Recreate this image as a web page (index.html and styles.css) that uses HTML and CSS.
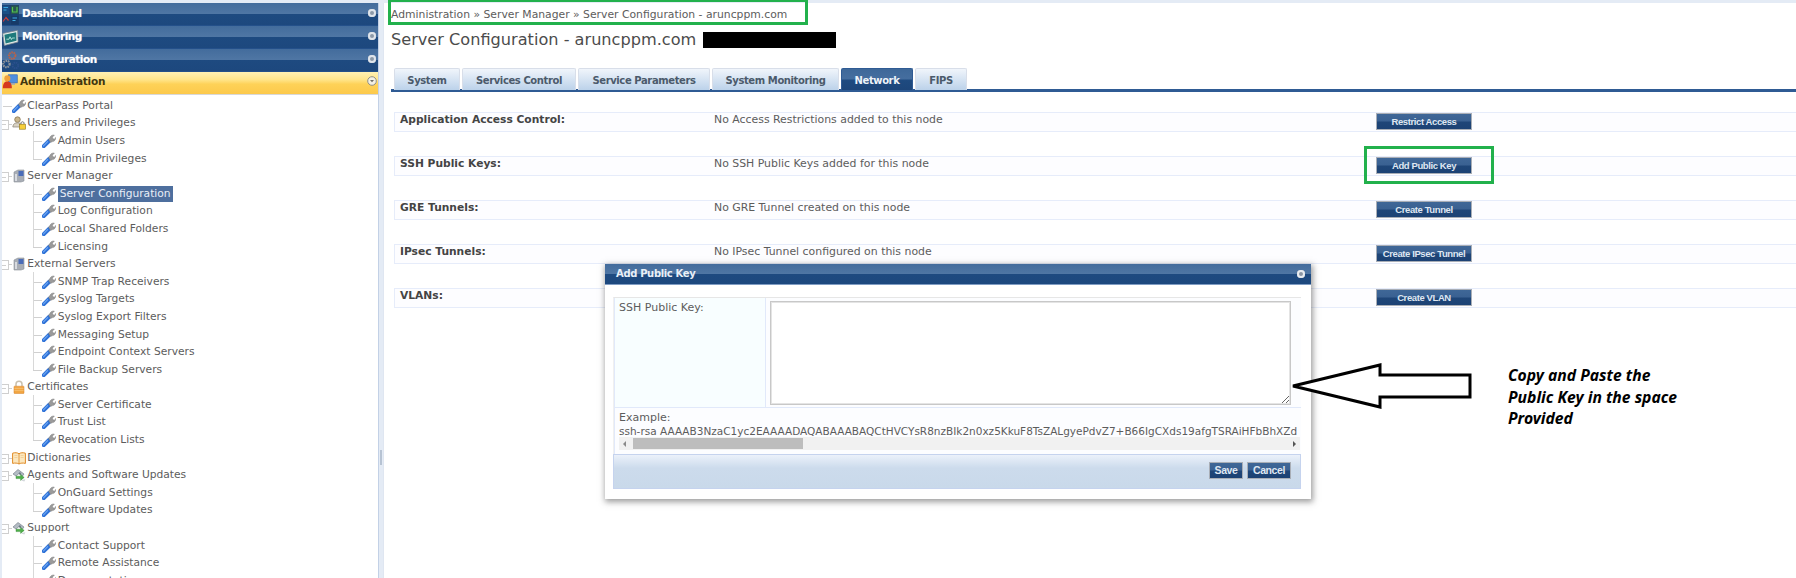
FILE: index.html
```html
<!DOCTYPE html>
<html lang="en">
<head>
<meta charset="utf-8">
<title>Server Configuration</title>
<link rel="stylesheet" href="styles.css">
</head>
<body>
<svg class="defs" width="0" height="0" aria-hidden="true">
  <symbol id="wrench" viewBox="0 0 14 14">
    <path d="M1.8 12.2 7.5 6.5" stroke="#2f72d8" stroke-width="4" stroke-linecap="round"/>
    <path d="M1.5 11.8 5.6 7.7" stroke="#6fa8f2" stroke-width="1.1" stroke-linecap="round"/>
    <path d="M6.5 5.5 8 3.2C9 1.4 10.8.6 12.4 1.1L10.4 3.2 11 4.8 12.6 5.2 13.6 3.4C14 5.4 12.6 7.4 10.6 7.6L8.6 8.4Z" fill="#9a9a9a" stroke="#757575" stroke-width=".4"/>
  </symbol>
  <symbol id="users" viewBox="0 0 14 14">
    <circle cx="5.5" cy="3.6" r="2.8" fill="#c9b68c" stroke="#7d6a48" stroke-width=".7"/>
    <path d="M.8 11C1 7.8 3 6.8 5.5 6.8S9.5 7.8 9.8 11Z" fill="#d8d2c4" stroke="#8b8272" stroke-width=".7"/>
    <rect x="7.5" y="8.2" width="6" height="5" fill="#f6cf3b" stroke="#8c7218" stroke-width=".6"/>
    <path d="M9 8V6.8A1.6 1.6 0 0 1 12 6.8V8" fill="none" stroke="#6f6f6f"/>
  </symbol>
  <symbol id="server" viewBox="0 0 14 14">
    <path d="M2 3 6 1H12V12L9 13H2Z" fill="#a8adb5" stroke="#8a9099" stroke-width=".6"/>
    <path d="M6.5 2H11.5V7H6.5Z" fill="#4a6cb8"/>
    <path d="M3 5H5V12H3Z" fill="#d8dbe0"/>
  </symbol>
  <symbol id="lock" viewBox="0 0 14 14">
    <path d="M4 6.5V4.2A3 3 0 0 1 10 4.2V6.5" fill="none" stroke="#c9c0ae" stroke-width="1.5"/>
    <rect x="2" y="6.2" width="10" height="7.3" rx=".6" fill="#f2a541" stroke="#d4822a" stroke-width=".5"/>
    <path d="M2.4 8.4H11.6M2.4 10.6H11.6" stroke="#f9c97f" stroke-width=".7"/>
  </symbol>
  <symbol id="book" viewBox="0 0 14 14">
    <path d="M.6 2.2C3 1.4 5.5 1.6 7 2.8 8.5 1.6 11 1.4 13.4 2.2V12.4C11 11.8 8.5 12 7 13 5.5 12 3 11.8.6 12.4Z" fill="#fbe7bf" stroke="#e08a24" stroke-width="1"/>
    <path d="M7 2.8V13" stroke="#e08a24" stroke-width=".8"/>
    <path d="M2.4 4.5H5.4M2.4 6.5H5.4M8.6 4.5H11.6M8.6 6.5H11.6" stroke="#eec27f" stroke-width=".6"/>
  </symbol>
  <symbol id="agent" viewBox="0 0 14 14">
    <path d="M1 6 6 1.5 12 6 10.5 8 7 5.5 4 8Z" fill="#b4bcc4" stroke="#6d7781" stroke-width=".6"/>
    <path d="M6.5 5.2 8 4 9.2 5.8 8 7Z" fill="#6f7b87"/>
    <path d="M4 8.2H8.6V6.4L12.2 9.4 8.6 12.4V10.6H4Z" fill="#4fb04a" stroke="#2f8030" stroke-width=".4"/>
    <path d="M9 12.6 13.4 11 12.4 13.4Z" fill="#d2d6db"/>
  </symbol>
</svg>

<aside class="sidebar">
  <nav class="accordion">
    <div class="nav-item">
      <svg class="nav-icon" viewBox="0 0 17 20">
        <rect width="17" height="20" fill="#1a3f70"/>
        <rect x=".5" y=".5" width="7" height="8.5" fill="#1b4f85"/>
        <path d="M1.5 2.5H6M1.5 5H4.5" stroke="#37a6e0" stroke-width="1.2"/>
        <rect x="9" y=".5" width="7.5" height="8.5" fill="#27564e"/>
        <path d="M10.5 2V7H15V2" fill="none" stroke="#54c24f" stroke-width="1.2"/>
        <path d="M1 16.5 4 12.5 6.5 15.5" fill="none" stroke="#cf3d38" stroke-width="1.2"/>
        <rect x="9" y="11" width="7.5" height="8.5" fill="#173a68"/>
        <path d="M10.5 13H15M10.5 15.5H13.5" stroke="#3faee8" stroke-width="1.2"/>
      </svg>
      <span class="nav-label">Dashboard</span><span class="nav-dot"></span>
    </div>
    <div class="nav-item">
      <svg class="nav-icon" viewBox="0 0 17 20">
        <path d="M.8 5.5 15.6 2.4 16 14 2.4 17.4Z" fill="#e4ecec" stroke="#7f8b8f" stroke-width=".7"/>
        <path d="M2.4 6.8 14.2 4.2 14.5 12.8 3.6 15.5Z" fill="#1f7a7c"/>
        <path d="M4.4 11.2H7L8 8.8 9.4 11.5 10.2 10H12.8" fill="none" stroke="#c8f4e8" stroke-width=".8"/>
      </svg>
      <span class="nav-label">Monitoring</span><span class="nav-dot"></span>
    </div>
    <div class="nav-item nav-gears">
      <svg class="nav-icon nav-icon-tall" viewBox="0 0 17 21">
        <circle cx="10.2" cy="5.6" r="3.2" fill="none" stroke="#b8634a" stroke-width="2" stroke-dasharray="1.6 .7"/>
        <circle cx="4.4" cy="14" r="3.2" fill="none" stroke="#8e949b" stroke-width="2.2" stroke-dasharray="1.6 .7"/>
        <circle cx="13.4" cy="15.5" r="2.8" fill="none" stroke="#2a4f8c" stroke-width="1.8" stroke-dasharray="1.5 .7"/>
      </svg>
      <span class="nav-label">Configuration</span><span class="nav-dot"></span>
    </div>
    <div class="nav-item nav-active">
      <svg class="nav-icon" viewBox="0 0 17 20">
        <rect x="6" y="2" width="10" height="9" fill="#4f8fe0" stroke="#2c62ad" stroke-width=".7"/>
        <path d="M8.5 11H13.5V13H8.5Z" fill="#9aa7b6"/>
        <circle cx="5" cy="6" r="3.4" fill="#f0a23c"/>
        <path d="M0 17C0 11.5 2 9.5 5 9.5S10 11.5 10 17Z" fill="#d5391f"/>
      </svg>
      <span class="nav-label">Administration</span>
      <svg class="nav-chevron" viewBox="0 0 10 10"><circle cx="5" cy="5" r="4.3" fill="#f3f0e4" stroke="#8f8f86"/><path d="M3 4 5 6.2 7 4Z" fill="#6f6f68"/></svg>
    </div>
  </nav>

  <ul class="tree">
    <li class="node root leaf"><svg class="ti"><use href="#wrench"/></svg><span>ClearPass Portal</span></li>
    <li class="node root group"><svg class="ti"><use href="#users"/></svg><span>Users and Privileges</span></li>
    <li class="node child"><svg class="ti"><use href="#wrench"/></svg><span>Admin Users</span></li>
    <li class="node child last"><svg class="ti"><use href="#wrench"/></svg><span>Admin Privileges</span></li>
    <li class="node root group"><svg class="ti"><use href="#server"/></svg><span>Server Manager</span></li>
    <li class="node child"><svg class="ti"><use href="#wrench"/></svg><span class="selected">Server Configuration</span></li>
    <li class="node child"><svg class="ti"><use href="#wrench"/></svg><span>Log Configuration</span></li>
    <li class="node child"><svg class="ti"><use href="#wrench"/></svg><span>Local Shared Folders</span></li>
    <li class="node child last"><svg class="ti"><use href="#wrench"/></svg><span>Licensing</span></li>
    <li class="node root group"><svg class="ti"><use href="#server"/></svg><span>External Servers</span></li>
    <li class="node child"><svg class="ti"><use href="#wrench"/></svg><span>SNMP Trap Receivers</span></li>
    <li class="node child"><svg class="ti"><use href="#wrench"/></svg><span>Syslog Targets</span></li>
    <li class="node child"><svg class="ti"><use href="#wrench"/></svg><span>Syslog Export Filters</span></li>
    <li class="node child"><svg class="ti"><use href="#wrench"/></svg><span>Messaging Setup</span></li>
    <li class="node child"><svg class="ti"><use href="#wrench"/></svg><span>Endpoint Context Servers</span></li>
    <li class="node child last"><svg class="ti"><use href="#wrench"/></svg><span>File Backup Servers</span></li>
    <li class="node root group"><svg class="ti"><use href="#lock"/></svg><span>Certificates</span></li>
    <li class="node child"><svg class="ti"><use href="#wrench"/></svg><span>Server Certificate</span></li>
    <li class="node child"><svg class="ti"><use href="#wrench"/></svg><span>Trust List</span></li>
    <li class="node child last"><svg class="ti"><use href="#wrench"/></svg><span>Revocation Lists</span></li>
    <li class="node root group"><svg class="ti"><use href="#book"/></svg><span>Dictionaries</span></li>
    <li class="node root group"><svg class="ti"><use href="#agent"/></svg><span>Agents and Software Updates</span></li>
    <li class="node child"><svg class="ti"><use href="#wrench"/></svg><span>OnGuard Settings</span></li>
    <li class="node child last"><svg class="ti"><use href="#wrench"/></svg><span>Software Updates</span></li>
    <li class="node root group"><svg class="ti"><use href="#agent"/></svg><span>Support</span></li>
    <li class="node child"><svg class="ti"><use href="#wrench"/></svg><span>Contact Support</span></li>
    <li class="node child"><svg class="ti"><use href="#wrench"/></svg><span>Remote Assistance</span></li>
    <li class="node child"><svg class="ti"><use href="#wrench"/></svg><span>Documentation</span></li>
  </ul>
</aside>

<div class="splitter"><span class="grip"></span></div>

<main class="main">
  <div class="crumbs">Administration » Server Manager » Server Configuration - aruncppm.com</div>
  <h1 class="title">Server Configuration - aruncppm.com <span class="redacted"></span></h1>

  <div class="tabs">
    <a class="tab tab-system">System</a>
    <a class="tab tab-services">Services Control</a>
    <a class="tab tab-params">Service Parameters</a>
    <a class="tab tab-monitor">System Monitoring</a>
    <a class="tab tab-network tab-on">Network</a>
    <a class="tab tab-fips">FIPS</a>
  </div>

  <section class="rows">
    <div class="row"><b>Application Access Control:</b><span>No Access Restrictions added to this node</span><button class="btn">Restrict Access</button></div>
    <div class="row"><b>SSH Public Keys:</b><span>No SSH Public Keys added for this node</span><button class="btn">Add Public Key</button></div>
    <div class="row"><b>GRE Tunnels:</b><span>No GRE Tunnel created on this node</span><button class="btn">Create Tunnel</button></div>
    <div class="row"><b>IPsec Tunnels:</b><span>No IPsec Tunnel configured on this node</span><button class="btn">Create IPsec Tunnel</button></div>
    <div class="row"><b>VLANs:</b><span></span><button class="btn">Create VLAN</button></div>
  </section>
</main>

<div class="modal">
  <header class="modal-head"><span>Add Public Key</span><i class="modal-close"></i></header>
  <div class="modal-body">
    <div class="form">
      <div class="form-top">
        <label class="form-label" for="key">SSH Public Key:</label>
        <div class="form-field"><textarea id="key" class="key-input"></textarea></div>
      </div>
      <div class="form-example">
        <div class="example-title">Example:</div>
        <div class="example-key">ssh-rsa AAAAB3NzaC1yc2EAAAADAQABAAABAQCtHVCYsR8nzBIk2n0xz5KkuF8TsZALgyePdvZ7+B66IgCXds19afgTSRAiHFbBhXZd</div>
        <div class="hscroll"><i class="arrow-l"></i><i class="thumb"></i><i class="arrow-r"></i></div>
      </div>
    </div>
    <footer class="modal-foot"><button class="btn btn-small btn-save">Save</button><button class="btn btn-small btn-cancel">Cancel</button></footer>
  </div>
</div>

<div class="mark mark-crumbs"></div>
<div class="mark mark-button"></div>
<svg class="callout-arrow" width="190" height="50" viewBox="0 0 190 50">
  <path d="M8 26 95 5V15H185V37H95V47Z" fill="#fff" stroke="#000" stroke-width="3"/>
</svg>
<p class="callout-text">Copy and Paste the<br>Public Key in the space<br>Provided</p>
</body>
</html>
```
FILE: styles.css
```css
* { box-sizing: border-box; }
html, body { margin: 0; height: 578px; overflow: hidden; }
body {
  display: flex;
  padding: 3px 0 0 2px;
  background: #e4ebf5;
  font: 10.7px/14px "DejaVu Sans", sans-serif;
  color: #5c5c5c;
  position: relative;
}
.defs { position: absolute; }

/* sidebar */
.sidebar { width: 377px; flex: none; background: #fff; border-right: 1px solid #c3d1e6; overflow: hidden; }
.accordion { display: flex; flex-direction: column; }
.nav-item {
  height: 23px;
  display: flex;
  align-items: center;
  position: relative;
  padding-left: 20px;
  padding-right: 2px;
  padding-bottom: 2px;
  background: linear-gradient(#436c9c 0, #4f76a4 48%, #1e4a80 50%, #1d487e 100%);
  border-bottom: 1px solid #24508a;
  color: #fff;
  font-weight: bold;
  font-size: 10.5px;
  letter-spacing: -.5px;
}
.nav-label { flex: 1; text-shadow: 0 0 1px #9db3cf; }
.nav-active {
  height: 22.5px;
  padding-left: 18px;
  padding-bottom: 4px;
  letter-spacing: -.2px;
  background: linear-gradient(#fff1b4 0, #ffe58a 35%, #fed258 55%, #fcc94b 100%);
  border-bottom: 1px solid #d8d8d8;
  color: #42360f;
}
.nav-active .nav-label { text-shadow: none; }
.nav-icon { position: absolute; left: 0; top: 2px; width: 17px; height: 20px; }
.nav-icon-tall { top: 1px; height: 21px; }
.nav-active .nav-icon { top: 1px; height: 18px; }
.nav-dot { width: 8px; height: 8px; border-radius: 50%; background: #e9edf2; box-shadow: inset 0 0 0 2px #dfe5ec, inset 0 0 0 4px #8c99a8; flex: none; }
.nav-chevron { width: 10px; height: 10px; flex: none; margin-right: -1px; }

/* tree */
.tree { list-style: none; margin: 0; padding: 2.5px 0 0; }
.node { height: 17.6px; display: flex; align-items: center; position: relative; white-space: nowrap; }
.node::before { content: ""; position: absolute; height: 1px; top: 9px; background: #d0d0d0; }
.root { padding-left: 10px; }
.root::before { left: 1px; width: 9px; }
.group::after {
  content: "";
  position: absolute;
  left: -3px; top: 5px;
  width: 8px; height: 8px;
  background: linear-gradient(#d0d0d0, #d0d0d0) center / 4px 1px no-repeat #fff;
  border: 1px solid #cfcfcf;
}
.child { padding-left: 40px; }
.child::before { left: 31px; width: 9px; }
.child::after { content: ""; position: absolute; left: 31px; top: -1px; width: 1px; height: 19.6px; background: #d8d8d8; }
.child.last::after { height: 10px; }
.ti { width: 14px; height: 14px; flex: none; margin-right: 1.7px; overflow: visible; }
.root .ti { margin-right: 1.3px; }
.selected { background: #4e6f9e; color: #e8eef7; padding: 1px 2px; line-height: 14px; }

/* splitter */
.splitter { width: 4px; flex: none; position: relative; }
.grip { position: absolute; left: 1px; top: 447px; width: 2px; height: 15px; background: #b7c3d3; }

/* main */
.main { flex: 1; min-width: 0; background: #fff; padding-left: 7px; padding-top: 4px; border-left: 1px solid #dfe6f1; }
.crumbs { height: 16px; line-height: 16px; white-space: nowrap; font-size: 10.8px; }
.title {
  margin: 6px 0 0;
  height: 22px;
  font-size: 16.15px;
  line-height: 22px;
  font-weight: normal;
  color: #4c4c4c;
  display: flex;
  align-items: center;
  white-space: pre;
}
.redacted { display: block; width: 133px; height: 16px; background: #000; margin-left: 2px; }

.tabs {
  display: flex;
  margin-top: 17px;
  height: 24px;
  padding: 0 0 0 3px;
  border-bottom: 2px solid #2f5b94;
  box-shadow: inset 0 -1px 0 #2f5b94;
}
.tab {
  height: 22px;
  margin-right: 2px;
  border: 1px solid #d8dee9;
  border-bottom: 0;
  border-radius: 2px 2px 0 0;
  background: linear-gradient(#f0f5fb, #bcd2ea);
  font-weight: bold;
  font-size: 10px;
  letter-spacing: -.4px;
  text-align: center;
  line-height: 24px;
  color: #4b5a6b;
}
.tab-system { width: 66px; }
.tab-services { width: 114px; }
.tab-params { width: 132px; }
.tab-monitor { width: 127px; }
.tab-network { width: 72px; }
.tab-fips { width: 52px; }
.tab-on { background: linear-gradient(#3e6899 0, #456e9f 45%, #1e4a80 55%, #1d467a 100%); color: #eef3f9; border-color: #2f5b94; }

.rows { padding: 20px 0 0 3px; display: flex; flex-direction: column; gap: 24px; }
.row {
  height: 20px;
  display: grid;
  grid-template-columns: 314px 662px auto;
  align-items: start;
  padding-left: 5px;
  background: #fdfdff;
  border: 1px solid #e6ecfa;
  border-right: 0;
  white-space: nowrap;
  line-height: 13px;
}
.row > b { color: #444; }
.row > span { font-size: 10.9px; }
.btn {
  display: block;
  width: 96px;
  height: 17px;
  padding: 0;
  border: 1px solid #a9aeb6;
  background: linear-gradient(#3f6797 0, #3a6192 48%, #1f4678 52%, #1c4274 100%);
  color: #dfe7f2;
  font: bold 9.5px/15px "Liberation Sans", sans-serif;
  letter-spacing: -.4px;
  text-align: center;
}

/* modal */
.modal {
  position: absolute;
  left: 605px;
  top: 264px;
  width: 706px;
  height: 235px;
  background: #fff;
  box-shadow: 1px 2px 6px 1px rgba(60, 60, 60, .5);
}
.modal-head {
  height: 21px;
  display: flex;
  align-items: center;
  justify-content: space-between;
  padding: 0 6px 0 11px;
  background: linear-gradient(#436c9c 0, #4f76a4 48%, #1e4a80 52%, #1d487e 100%);
  color: #e9eff7;
  font-weight: bold;
  font-size: 10px;
  letter-spacing: -.35px;
  border-bottom: 1px solid #7f9cc3;
}
.modal-close { width: 8px; height: 8px; border-radius: 50%; background: #eef1f5; box-shadow: inset 0 0 0 2px #e8ecf1, inset 0 0 0 4px #8a95a3; }
.modal-body { padding: 12px 10px 0 8px; }
.form { border-top: 1px solid #e6e6e6; border-left: 1px solid #f0f0f0; }
.form-top { display: flex; height: 110px; border-bottom: 1px solid #e1e9fa; }
.form-label { width: 152px; flex: none; background: #f8feff; border-right: 1px solid #e1e9fa; border-left: 1px solid #e1e9fa; padding: 3px 4px; font-size: 11px; }
.form-field { flex: 1; padding: 3px 9px 2px 4px; background: #fcfdff; }
.key-input { display: block; width: 521px; height: 104px; margin: 0; border: 1px solid #c8c8c8; box-shadow: inset 0 0 0 1px #e4e4e4; background: #fff; }
.form-example { height: 46px; padding: 4px 1px 0 4px; background: #fcfdff; border-left: 1px solid #e1e9fa; }
.example-title { line-height: 12.5px; white-space: nowrap; font-size: 11px; }
.example-key { line-height: 12.5px; white-space: nowrap; overflow: hidden; font-size: 10.5px; }
.hscroll { height: 13px; margin-top: 0; display: flex; align-items: center; background: #f1f1f1; position: relative; padding: 0 4px; justify-content: space-between; }
.thumb { position: absolute; left: 14px; top: 1px; width: 170px; height: 11px; background: #bdbdbd; }
.arrow-l { border: 3px solid transparent; border-right-color: #8a8a8a; border-left: 0; }
.arrow-r { border: 3px solid transparent; border-left-color: #555; border-right: 0; }
.modal-foot {
  height: 35px;
  display: flex;
  justify-content: flex-end;
  align-items: flex-start;
  gap: 4px;
  padding: 7px 9px 0 0;
  background: linear-gradient(#ebf1fa 0, #ccdbec 40%, #c9d9ea 100%);
  border: 1px solid #c5d3ee;
}
.btn-small { height: 17px; font-size: 10.5px; }
.btn-save { width: 34px; }
.btn-cancel { width: 44px; }

/* annotations */
.mark { position: absolute; border: 3px solid #22b14c; }
.mark-crumbs { left: 388px; top: -1px; width: 420px; height: 26px; }
.mark-button { left: 1364px; top: 146px; width: 130px; height: 38px; }
.callout-arrow { position: absolute; left: 1285px; top: 360px; }
.callout-text {
  position: absolute;
  left: 1508px;
  top: 365px;
  margin: 0;
  font: italic bold 15.7px/21.7px "Noto Sans", sans-serif;
  color: #000;
  white-space: nowrap;
}
```
